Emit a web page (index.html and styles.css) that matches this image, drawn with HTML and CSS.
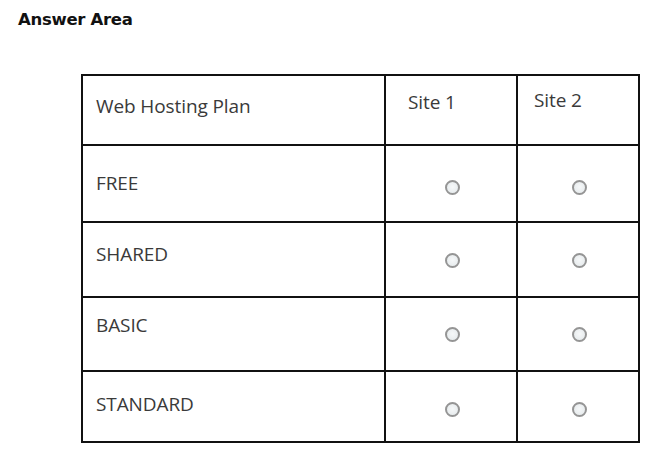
FILE: index.html
```html
<!DOCTYPE html>
<html>
<head>
<meta charset="utf-8">
<link rel="stylesheet" href="styles.css">
</head>
<body>
<div class="page">
  <h1 class="title">Answer Area</h1>
  <table class="grid">
    <tr class="r-head">
      <td class="c-plan"><span class="lbl lbl-head">Web Hosting Plan</span></td>
      <td class="c-site1"><span class="lbl lbl-site1">Site 1</span></td>
      <td class="c-site2"><span class="lbl lbl-site2">Site 2</span></td>
    </tr>
    <tr class="r-free">
      <td class="c-plan"><span class="lbl">FREE</span></td>
      <td class="c-radio"><span class="radio"></span></td>
      <td class="c-radio"><span class="radio"></span></td>
    </tr>
    <tr class="r-shared">
      <td class="c-plan"><span class="lbl">SHARED</span></td>
      <td class="c-radio"><span class="radio"></span></td>
      <td class="c-radio"><span class="radio"></span></td>
    </tr>
    <tr class="r-basic">
      <td class="c-plan"><span class="lbl">BASIC</span></td>
      <td class="c-radio"><span class="radio"></span></td>
      <td class="c-radio"><span class="radio"></span></td>
    </tr>
    <tr class="r-std">
      <td class="c-plan"><span class="lbl">STANDARD</span></td>
      <td class="c-radio"><span class="radio"></span></td>
      <td class="c-radio"><span class="radio"></span></td>
    </tr>
  </table>
</div>
</body>
</html>
```

FILE: styles.css
```css
html, body {
  margin: 0;
  padding: 0;
  background: #fff;
}
.page {
  width: 657px;
  height: 455px;
  padding: 10px 0 0 18px;
  box-sizing: border-box;
}
.title {
  margin: 0;
  font-family: "DejaVu Sans", sans-serif;
  font-weight: bold;
  font-size: 16.5px;
  line-height: 20px;
  color: #111;
  letter-spacing: -0.3px;
}
.grid {
  margin: 44px 0 0 63px;
  border-collapse: collapse;
  font-family: "Open Sans", sans-serif;
  font-size: 19px;
  color: #3a3a3a;
}
.grid td {
  border: 2px solid #111;
  padding: 0;
  vertical-align: top;
  box-sizing: border-box;
}
.c-plan { width: 303px; }
.c-site1 { width: 132px; }
.c-site2 { width: 122px; }
.r-head td { height: 70px; }
.r-free td { height: 77px; }
.r-shared td { height: 75px; }
.r-basic td { height: 74px; }
.r-std td { height: 71px; }
.lbl {
  display: block;
  padding-left: 13px;
  padding-top: 24px;
  line-height: 26px;
  letter-spacing: -0.1px;
}
.lbl-head { padding-top: 17px; }
.lbl-site1 { padding-left: 22px; padding-top: 13px; }
.lbl-site2 { padding-left: 16px; padding-top: 11px; }
.r-shared .lbl { padding-top: 18px; }
.r-basic .lbl { padding-top: 14px; }
.r-std .lbl { padding-top: 19px; }
.radio {
  display: block;
  width: 15px;
  height: 15px;
  border: 2px solid #959595;
  border-radius: 50%;
  background: radial-gradient(circle at 50% 45%, #f6f8f9 0%, #e3e8ea 100%);
  box-sizing: border-box;
  margin: 34px auto 0;
  position: relative;
  left: 1px;
}
.r-shared .radio { margin-top: 30px; }
.r-basic .radio { margin-top: 29px; }
.r-std .radio { margin-top: 30px; }
```
